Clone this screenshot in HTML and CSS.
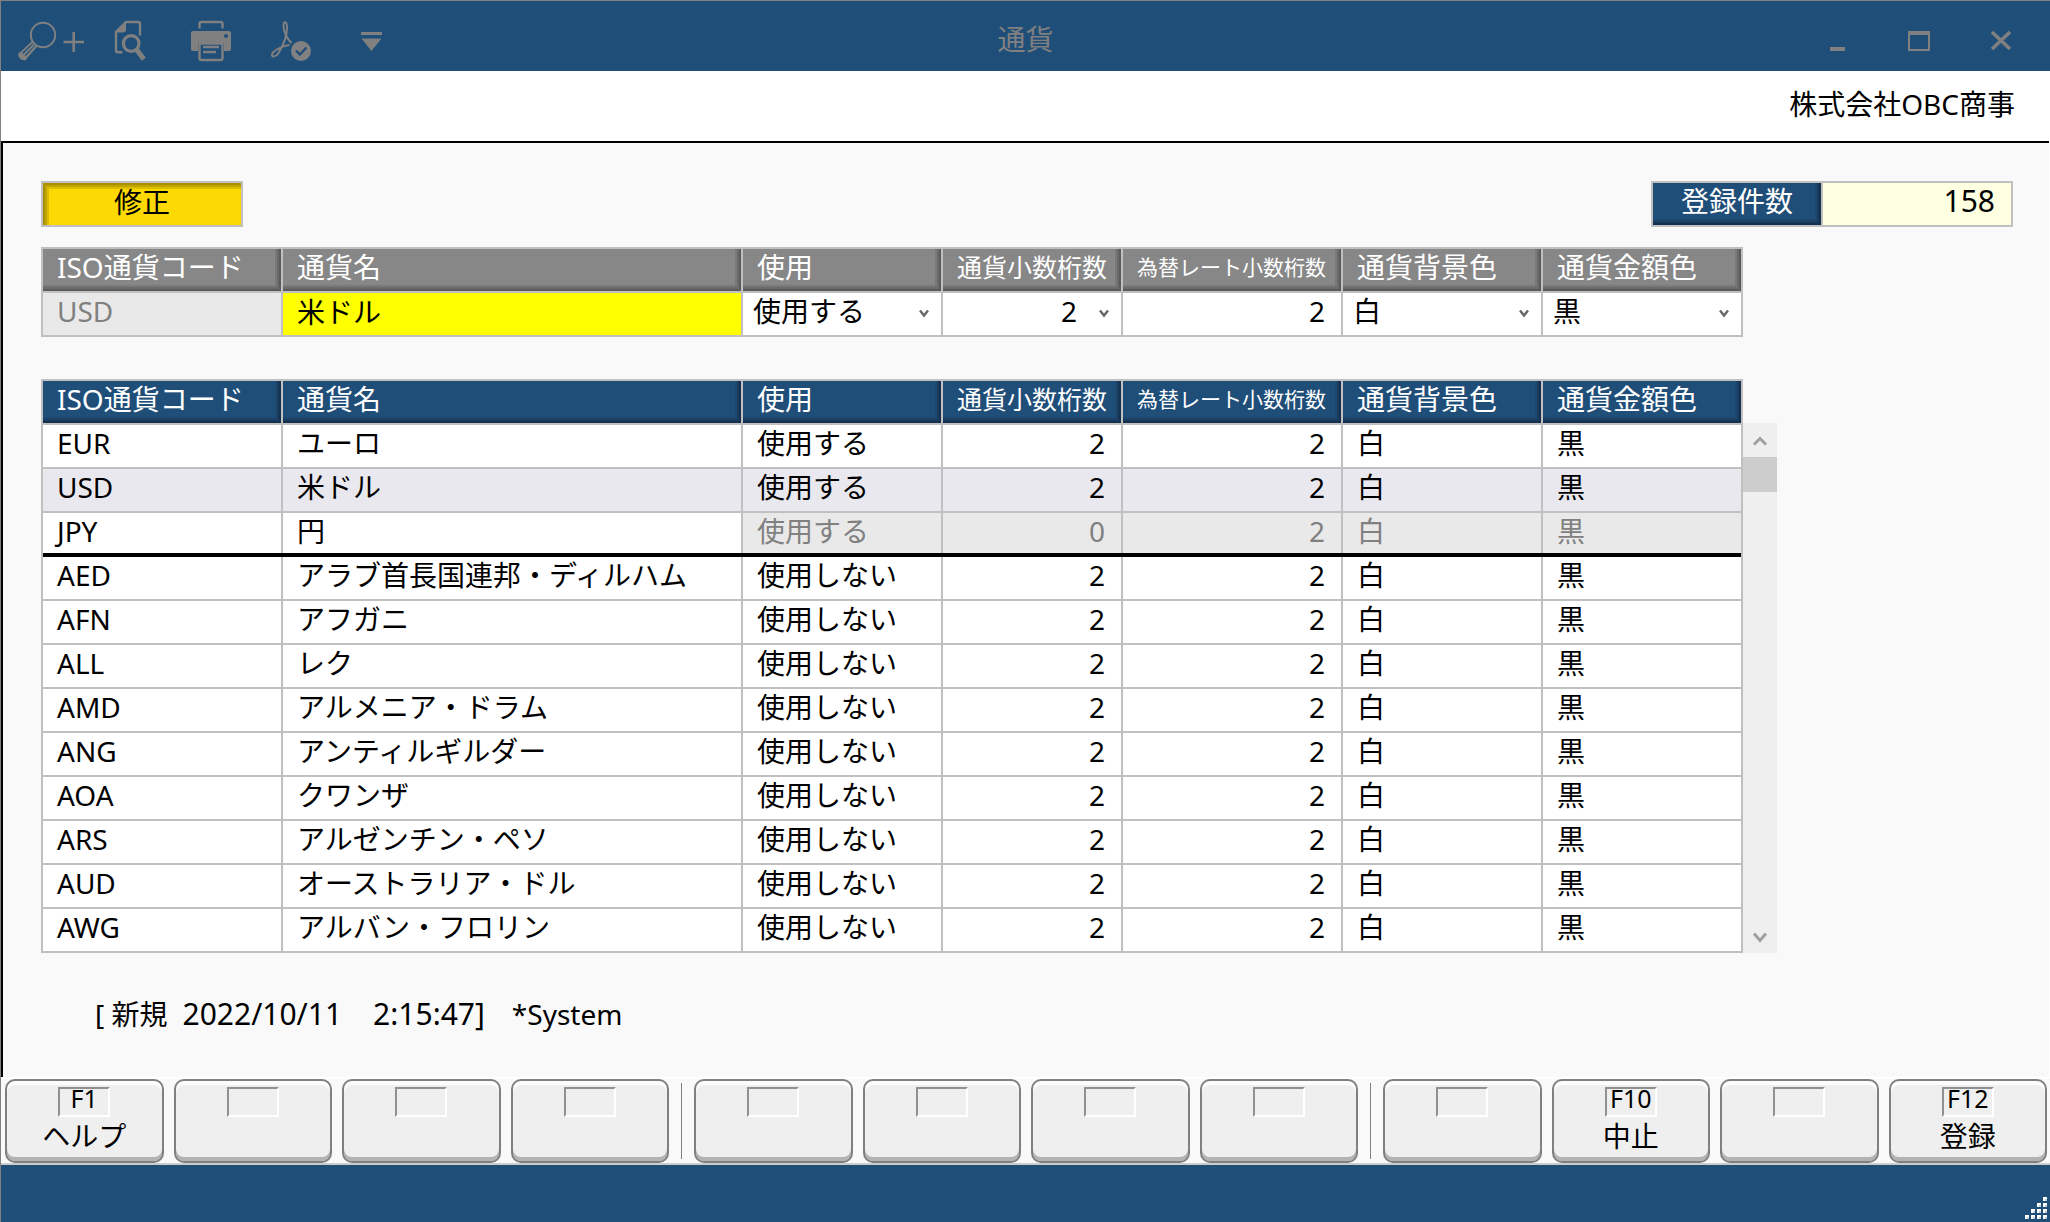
FILE: index.html
```html
<!DOCTYPE html>
<html lang="ja">
<head>
<meta charset="utf-8">
<title>通貨</title>
<link rel="stylesheet" href="styles.css">
</head>
<body>
<div class="window">
  <header class="titlebar">
    <nav class="tools" aria-label="ツール">
      <button type="button" class="tool" aria-label="検索">
        <svg width="68" height="70" viewBox="17 1 68 70" fill="none" stroke="#808080" stroke-width="2">
          <circle cx="43" cy="35" r="12.200"/>
          <path d="M33 41.500L20 53.500c-2 3 2 7 5.500 5L37 45.500M23 55.500L34 44.500M26 57L35 47" stroke-width="1.800"/>
          <path d="M20.500 54.500l4 3.500" stroke-width="4.500" stroke-linecap="round"/>
          <path d="M63.500 42H84M73.700 32v20" stroke-width="2.600"/>
        </svg>
      </button>
      <button type="button" class="tool" aria-label="プレビュー">
        <svg width="50" height="70" viewBox="113 1 50 70" fill="none" stroke="#808080">
          <path d="M122.500 52.200h-4.500q-2 0-2-2V32l10-10h12q2 0 2 2v11.500" stroke-width="2.400"/>
          <path d="M115.500 32.500L126 21.500v8q0 3-3 3z" fill="#808080" stroke="none"/>
          <circle cx="131.200" cy="43.500" r="7.800" stroke-width="3.200"/>
          <path d="M136.500 49.500l7.300 9.800" stroke-width="5"/>
        </svg>
      </button>
      <button type="button" class="tool" aria-label="印刷">
        <svg width="52" height="70" viewBox="191 1 52 70" fill="none" stroke="#808080" stroke-width="2.400">
          <path d="M199.500 28.500V24q0-2 2-2h19q2 0 2 2v4.500"/>
          <path fill="#808080" stroke="none" fill-rule="evenodd" d="M193 31h36q2 0 2 2v16q0 2-2 2h-5v-8h-26v8h-5q-2 0-2-2V33q0-2 2-2zM226 34a2 2 0 1 0 0 4 2 2 0 0 0 0-4z"/>
          <path d="M199.500 43.500V58q0 2 2 2h19q2 0 2-2V43.500zM203 47h16M203 52h13"/>
        </svg>
      </button>
      <button type="button" class="tool" aria-label="PDF">
        <svg width="62" height="70" viewBox="271 1 62 70" fill="none" stroke="#808080" stroke-width="2">
          <path d="M289.500 45C281.500 46 272.500 51 272 54.500c-.3 3 4 2.500 6.500-1.500 4-6.500 8.500-17 8.500-25.500 0-6.500-3.500-7-3.500-1.500 0 6.500 4.500 14 8 17"/>
          <circle cx="301" cy="51" r="10" fill="#808080" stroke="none"/>
          <path d="M296 50.500l3.800 4 6.700-7" stroke="#1f4e79" stroke-width="2.400"/>
        </svg>
      </button>
      <button type="button" class="tool" aria-label="その他">
        <svg width="22" height="70" viewBox="361 1 22 70" fill="#808080">
          <path d="M361 32h21v3h-21zM361.500 38.500h20L371.500 51z"/>
        </svg>
      </button>
    </nav>
    <h1 class="title">通貨</h1>
    <div class="winctl">
      <button type="button" class="ctl" aria-label="最小化"><svg width="24" height="24" viewBox="0 0 24 24"><path d="M5 19h15v4H5z" fill="#808080"/></svg></button>
      <button type="button" class="ctl" aria-label="最大化"><svg width="24" height="24" viewBox="0 0 24 24"><path d="M1 3h22v20H1zM3 7v14h18V7z" fill="#808080" fill-rule="evenodd"/></svg></button>
      <button type="button" class="ctl" aria-label="閉じる"><svg width="24" height="24" viewBox="0 0 24 24"><path d="M3 4l18 17M21 4L3 21" stroke="#808080" stroke-width="3.600"/></svg></button>
    </div>
  </header>
  <div class="company">株式会社OBC商事</div>

  <main class="panel">
    <div class="summary">
      <button type="button" class="mode">修正</button>
      <div class="count">
        <label for="total" class="count-label">登録件数</label>
        <output id="total" class="count-value">158</output>
      </div>
    </div>

    <table class="grid grid-form">
      <colgroup><col class="c-code"><col class="c-name"><col class="c-use"><col class="c-dec"><col class="c-rate"><col class="c-color"><col class="c-color"></colgroup>
      <thead><tr>
        <th id="h-code">ISO通貨コード</th><th id="h-name">通貨名</th><th id="h-use">使用</th><th id="h-dec" class="mid">通貨小数桁数</th><th id="h-rate" class="small">為替レート小数桁数</th><th id="h-bg">通貨背景色</th><th id="h-fg">通貨金額色</th>
      </tr></thead>
      <tbody><tr>
        <td class="off"><input class="field" type="text" value="USD" disabled aria-labelledby="h-code"></td>
        <td class="active"><input class="field" type="text" value="米ドル" aria-labelledby="h-name"></td>
        <td><span class="pick"><select class="select" aria-labelledby="h-use"><option>使用する</option><option>使用しない</option></select><svg class="chev" width="10" height="9" viewBox="0 0 10 9"><path d="M1 1.500l4 5 4-5" fill="none" stroke="#666" stroke-width="2.400"/></svg></span></td>
        <td><span class="pick"><select class="select num" aria-labelledby="h-dec"><option>2</option><option>0</option></select><svg class="chev" width="10" height="9" viewBox="0 0 10 9"><path d="M1 1.500l4 5 4-5" fill="none" stroke="#666" stroke-width="2.400"/></svg></span></td>
        <td><input class="field num" type="text" value="2" aria-labelledby="h-rate"></td>
        <td><span class="pick"><select class="select" aria-labelledby="h-bg"><option>白</option></select><svg class="chev" width="10" height="9" viewBox="0 0 10 9"><path d="M1 1.500l4 5 4-5" fill="none" stroke="#666" stroke-width="2.400"/></svg></span></td>
        <td><span class="pick"><select class="select" aria-labelledby="h-fg"><option>黒</option></select><svg class="chev" width="10" height="9" viewBox="0 0 10 9"><path d="M1 1.500l4 5 4-5" fill="none" stroke="#666" stroke-width="2.400"/></svg></span></td>
      </tr></tbody>
    </table>

    <div class="list">
      <table class="grid grid-list">
        <colgroup><col class="c-code"><col class="c-name"><col class="c-use"><col class="c-dec"><col class="c-rate"><col class="c-color"><col class="c-color"></colgroup>
        <thead><tr><th>ISO通貨コード</th><th>通貨名</th><th>使用</th><th class="mid">通貨小数桁数</th><th class="small">為替レート小数桁数</th><th>通貨背景色</th><th>通貨金額色</th></tr></thead>
        <tbody>
          <tr><td>EUR</td><td>ユーロ</td><td>使用する</td><td class="num">2</td><td class="num">2</td><td>白</td><td>黒</td></tr>
          <tr class="selected"><td>USD</td><td>米ドル</td><td>使用する</td><td class="num">2</td><td class="num">2</td><td>白</td><td>黒</td></tr>
          <tr class="base"><td>JPY</td><td>円</td><td class="off">使用する</td><td class="num off">0</td><td class="num off">2</td><td class="off">白</td><td class="off">黒</td></tr>
          <tr><td>AED</td><td>アラブ首長国連邦・ディルハム</td><td>使用しない</td><td class="num">2</td><td class="num">2</td><td>白</td><td>黒</td></tr>
          <tr><td>AFN</td><td>アフガニ</td><td>使用しない</td><td class="num">2</td><td class="num">2</td><td>白</td><td>黒</td></tr>
          <tr><td>ALL</td><td>レク</td><td>使用しない</td><td class="num">2</td><td class="num">2</td><td>白</td><td>黒</td></tr>
          <tr><td>AMD</td><td>アルメニア・ドラム</td><td>使用しない</td><td class="num">2</td><td class="num">2</td><td>白</td><td>黒</td></tr>
          <tr><td>ANG</td><td>アンティルギルダー</td><td>使用しない</td><td class="num">2</td><td class="num">2</td><td>白</td><td>黒</td></tr>
          <tr><td>AOA</td><td>クワンザ</td><td>使用しない</td><td class="num">2</td><td class="num">2</td><td>白</td><td>黒</td></tr>
          <tr><td>ARS</td><td>アルゼンチン・ペソ</td><td>使用しない</td><td class="num">2</td><td class="num">2</td><td>白</td><td>黒</td></tr>
          <tr><td>AUD</td><td>オーストラリア・ドル</td><td>使用しない</td><td class="num">2</td><td class="num">2</td><td>白</td><td>黒</td></tr>
          <tr><td>AWG</td><td>アルバン・フロリン</td><td>使用しない</td><td class="num">2</td><td class="num">2</td><td>白</td><td>黒</td></tr>
        </tbody>
      </table>
      <div class="scroll">
        <button type="button" class="scroll-btn" aria-label="上へ"><svg width="16" height="14" viewBox="0 0 16 14"><path d="M2 11.500l6-6 6 6" fill="none" stroke="#a0a0a0" stroke-width="3"/></svg></button>
        <div class="thumb"></div>
        <button type="button" class="scroll-btn last" aria-label="下へ"><svg width="16" height="14" viewBox="0 0 16 14"><path d="M2 3.500l6 7 6-7" fill="none" stroke="#a0a0a0" stroke-width="3"/></svg></button>
      </div>
    </div>

    <p class="stamp"><span>[ 新規</span><time class="clock" datetime="2022-10-11">2022/10/11</time><span class="clock time">2:15:47]</span><span>*System</span></p>
  </main>

  <footer class="keys">
    <div class="group">
      <button type="button" class="key"><span class="cap">F1</span>ヘルプ</button>
      <button type="button" class="key" aria-label="F2"><span class="cap"></span></button>
      <button type="button" class="key" aria-label="F3"><span class="cap"></span></button>
      <button type="button" class="key" aria-label="F4"><span class="cap"></span></button>
    </div>
    <div class="sep"></div>
    <div class="group">
      <button type="button" class="key" aria-label="F5"><span class="cap"></span></button>
      <button type="button" class="key" aria-label="F6"><span class="cap"></span></button>
      <button type="button" class="key" aria-label="F7"><span class="cap"></span></button>
      <button type="button" class="key" aria-label="F8"><span class="cap"></span></button>
    </div>
    <div class="sep"></div>
    <div class="group">
      <button type="button" class="key" aria-label="F9"><span class="cap"></span></button>
      <button type="button" class="key"><span class="cap">F10</span>中止</button>
      <button type="button" class="key" aria-label="F11"><span class="cap"></span></button>
      <button type="button" class="key"><span class="cap">F12</span>登録</button>
    </div>
  </footer>
  <div class="statusbar">
    <svg width="22" height="22" viewBox="0 0 22 22" fill="#fff">
      <path d="M18 0h4v4h-4zM12 6h4v4h-4zM18 6h4v4h-4zM6 12h4v4H6zM12 12h4v4h-4zM18 12h4v4h-4zM0 18h4v4H0zM6 18h4v4H6zM12 18h4v4h-4zM18 18h4v4h-4z"/>
      <path d="M20 2h2v2h-2zM14 8h2v2h-2zM20 8h2v2h-2zM8 14h2v2H8zM14 14h2v2h-2zM20 14h2v2h-2zM2 20h2v2H2zM8 20h2v2H8zM14 20h2v2h-2zM20 20h2v2h-2z" fill="#c4cdd6"/>
    </svg>
  </div>
</div>
</body>
</html>
```
FILE: styles.css
```css
* { box-sizing: border-box; }

body {
  margin: 0;
  font: 28px/36px "Noto Sans", "Noto Sans CJK JP", sans-serif;
  color: #000;
}

button, input, select {
  margin: 0;
  padding: 0;
  border: 0;
  background: none;
  font: inherit;
  color: inherit;
}

svg { display: block; }

.window {
  display: flex;
  flex-direction: column;
  min-height: 100vh;
  border-top: 1px solid #808080;
  border-left: 1px solid #808080;
  background: #fff;
}

/* title bar */
.titlebar {
  display: grid;
  grid-template-columns: 1fr auto 1fr;
  height: 70px;
  background: #1f4e79;
}
.tools { display: flex; gap: 28px; padding-left: 16px; }
.title {
  margin: 0;
  padding-top: 20px;
  font-size: 28px;
  font-weight: 400;
  line-height: 36px;
  color: #808080;
}
.winctl {
  display: flex;
  justify-content: flex-end;
  padding: 27px 8px 0 0;
}
.ctl {
  display: flex;
  justify-content: center;
  width: 82px;
  height: 28px;
}

.company {
  height: 70px;
  padding: 15px 35px 0 0;
  text-align: right;
}

/* work area */
.panel {
  flex: 1;
  margin-right: 1px;
  padding: 38px 36px 0 38px;
  border-top: 2px solid #000;
  border-left: 2px solid #000;
  background: #f9f9f9;
}
.summary {
  display: flex;
  justify-content: space-between;
  margin-bottom: 20px;
}
.mode {
  width: 202px;
  height: 46px;
  padding-bottom: 4px;
  border: 2px solid #c0c0c0;
  background: #fcd902;
  box-shadow: inset 2px 2px #a89000, inset 4px 4px #bfa400, inset 6px 6px #dcbd00;
}
.count {
  display: flex;
  width: 362px;
  height: 46px;
  border: 2px solid #c0c0c0;
  line-height: 36px;
}
.count-label {
  width: 168px;
  background: #1f4e79;
  box-shadow: inset -2px -2px #152f4f, inset -4px -4px #193c61, inset -6px -6px #1d476f;
  color: #fff;
  text-align: center;
}
.count-value {
  flex: 1;
  padding-right: 16px;
  border-left: 2px solid #c0c0c0;
  background: #ffffe1;
  font-size: 30px;
  text-align: right;
}

/* currency grids */
.grid {
  width: 100%;
  max-width: 1702px;
  border: 0 solid #c0c0c0;
  border-width: 2px 0 0 2px;
  border-spacing: 0;
  table-layout: fixed;
  background: #fff;
}
.c-code { width: 240px; }
.c-name { width: 460px; }
.c-use, .c-color { width: 200px; }
.c-dec { width: 180px; }
.c-rate { width: 220px; }

.grid th, .grid td {
  height: 44px;
  padding: 0 14px 6px;
  border: 0 solid #c0c0c0;
  border-width: 0 2px 2px 0;
  font-weight: 400;
  text-align: left;
  white-space: nowrap;
}
.grid th { color: #fff; }
.grid .mid { font-size: 25px; }
.grid .small { font-size: 21px; }
.grid .num { padding-right: 16px; text-align: right; }
.grid .off { background: #e9e9e9; color: #808080; }

.grid-form { margin-bottom: 42px; }
.grid-form th {
  background: #878787;
  box-shadow: inset -2px -2px #5b5b5b, inset -4px -4px #6b6b6b, inset -6px -6px #797979;
}
.grid-form tbody td { padding: 0; }
.grid-list th {
  background: #1f4e79;
  box-shadow: inset -2px -2px #152f4f, inset -4px -4px #193c61, inset -6px -6px #1d476f;
}

.field, .select {
  display: block;
  width: 100%;
  height: 42px;
  padding: 0 14px 6px;
  border-radius: 0;
  outline: 0;
}
.select {
  grid-area: 1 / 1;
  padding-left: 10px;
  appearance: none;
}
.grid .select.num { padding-right: 44px; text-align-last: right; }
.active { background: #ff0; }
.pick { display: grid; align-items: center; }
.chev {
  grid-area: 1 / 1;
  justify-self: end;
  margin: 0 12px 2px 0;
  pointer-events: none;
}

.selected { background: #e9e8ef; }
.base { position: relative; }
.base::after {
  content: "";
  position: absolute;
  left: 0;
  right: 2px;
  bottom: 0;
  height: 4px;
  background: #000;
}

.list { display: flex; }
.scroll {
  display: flex;
  flex: 0 0 34px;
  flex-direction: column;
  margin-top: 44px;
  background: #efefef;
}
.scroll-btn {
  display: grid;
  place-items: center;
  height: 34px;
}
.scroll-btn.last { height: 30px; margin: auto 0 0; padding-bottom: 2px; }
.thumb { height: 35px; background: #cdcdcd; }

.stamp {
  display: flex;
  gap: 15px;
  margin: 43px 0 0;
  padding-left: 54px;
}
.clock { font-size: 30px; }
.time { margin: 0 12px 0 16px; }

/* function keys */
.keys {
  display: flex;
  gap: 12px;
  padding: 0 3px 0 4px;
  border-top: 2px solid #fff;
  border-bottom: 2px solid #ccc;
  background: #f9f9f9;
}
.group {
  display: grid;
  flex: 1;
  grid-template-columns: repeat(4, 1fr);
  gap: 10px;
}
.sep { width: 1px; margin: 4px 0; background: #808080; }
.key {
  display: flex;
  flex-direction: column;
  align-items: center;
  height: 84px;
  padding-top: 6px;
  border: 2px solid #808080;
  border-radius: 10px;
  background: #efefef;
  box-shadow: inset 0 4px #fdfdfd, inset 0 -4px #b3b3b3;
}
.cap {
  width: 52px;
  height: 30px;
  margin-bottom: 1px;
  border: 2px solid #909090;
  border-right-color: #fff;
  border-bottom-color: #fff;
  font-size: 25px;
  line-height: 18px;
}

.statusbar {
  display: flex;
  align-items: flex-end;
  justify-content: flex-end;
  height: 57px;
  padding: 3px;
  background: #1f4e79;
}
```
